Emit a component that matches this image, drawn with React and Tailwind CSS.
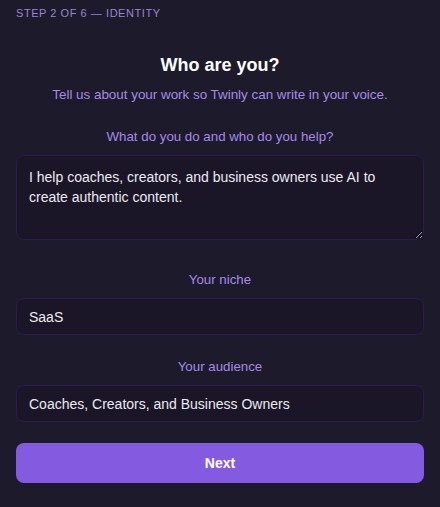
import React, { useState } from 'react';

const labelClass = 'block text-center text-[13.3px] leading-5 text-[#a68ae6]';
const fieldClass =
  'block w-full rounded-lg border border-[#2c1a55] bg-[#1a1627] px-3 text-[14px] text-[#ece9f3] outline-none focus:border-[#845ae0]';

const App = () => {
  const [about, setAbout] = useState(
    'I help coaches, creators, and business owners use AI to create authentic content.'
  );
  const [niche, setNiche] = useState('SaaS');
  const [audience, setAudience] = useState('Coaches, Creators, and Business Owners');

  return (
    <div
      className="min-h-[507px] bg-[#1d1a2b] px-4 pt-[5px] pb-6"
      style={{ fontFamily: '"Liberation Sans", Arial, sans-serif' }}
    >
      <div className="text-[11px] leading-4 tracking-[0.05em] text-[#9a85cf] uppercase">
        Step 2 of 6 — Identity
      </div>

      <h1 className="mt-[30px] text-center text-[18px] leading-7 font-bold text-white">Who are you?</h1>
      <p className="mt-[6px] text-center text-[13.4px] leading-5 text-[#a68ae6]">
        Tell us about your work so Twinly can write in your voice.
      </p>

      <label htmlFor="about" className={`${labelClass} mt-[22px]`}>
        What do you do and who do you help?
      </label>
      <textarea
        id="about"
        value={about}
        onChange={(e) => setAbout(e.target.value)}
        className={`${fieldClass} mt-2 h-[85px] resize-y py-[11px] leading-5`}
      />

      <label htmlFor="niche" className={`${labelClass} mt-[30px]`}>
        Your niche
      </label>
      <input
        id="niche"
        value={niche}
        onChange={(e) => setNiche(e.target.value)}
        className={`${fieldClass} mt-2 h-[37px]`}
      />

      <label htmlFor="audience" className={`${labelClass} mt-[22px]`}>
        Your audience
      </label>
      <input
        id="audience"
        value={audience}
        onChange={(e) => setAudience(e.target.value)}
        className={`${fieldClass} mt-2 h-[37px]`}
      />

      <button
        type="button"
        className="mt-[21px] block h-10 w-full rounded-lg bg-[#845ae0] text-[14px] font-bold text-white hover:bg-[#7a50d6]"
      >
        Next
      </button>
    </div>
  );
};

export default App;
